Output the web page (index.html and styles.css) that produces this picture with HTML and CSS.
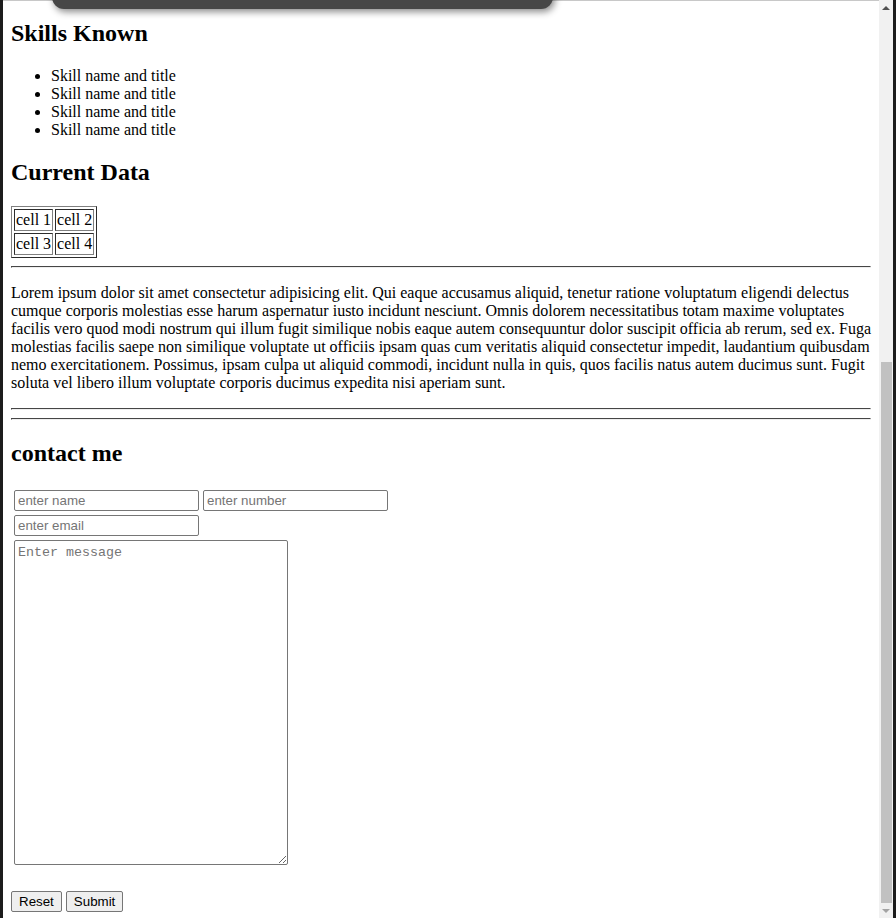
FILE: index.html
```html
<!DOCTYPE html>
<html lang="en">
<head>
    <meta charset="UTF-8">
    <meta name="viewport" content="width=device-width, initial-scale=1.0">
    <title>My Page</title>
    <link rel="stylesheet" href="styles.css">
</head>
<body>
    <div class="edge"></div>
    <div class="window">
        <div class="navbar"></div>
        <div class="page">
            <h2>Skills Known</h2>
            <ul>
                <li>Skill name and title</li>
                <li>Skill name and title</li>
                <li>Skill name and title</li>
                <li>Skill name and title</li>
            </ul>
            <h2>Current Data</h2>
            <table class="data" border="1">
                <tr><td>cell 1</td><td>cell 2</td></tr>
                <tr><td>cell 3</td><td>cell 4</td></tr>
            </table>
            <hr>
            <p>Lorem ipsum dolor sit amet consectetur adipisicing elit. Qui eaque accusamus aliquid, tenetur ratione voluptatum eligendi delectus cumque corporis molestias esse harum aspernatur iusto incidunt nesciunt. Omnis dolorem necessitatibus totam maxime voluptates facilis vero quod modi nostrum qui illum fugit similique nobis eaque autem consequuntur dolor suscipit officia ab rerum, sed ex. Fuga molestias facilis saepe non similique voluptate ut officiis ipsam quas cum veritatis aliquid consectetur impedit, laudantium quibusdam nemo exercitationem. Possimus, ipsam culpa ut aliquid commodi, incidunt nulla in quis, quos facilis natus autem ducimus sunt. Fugit soluta vel libero illum voluptate corporis ducimus expedita nisi aperiam sunt.</p>
            <hr>
            <hr>
            <h2>contact me</h2>
            <form class="contact">
                <table>
                    <tr>
                        <td><input type="text" class="field" placeholder="enter name"></td>
                        <td><input type="text" class="field" placeholder="enter number"></td>
                    </tr>
                    <tr>
                        <td><input type="email" class="field" placeholder="enter email"></td>
                    </tr>
                    <tr>
                        <td colspan="2"><textarea class="message" placeholder="Enter message"></textarea></td>
                    </tr>
                </table>
                <br>
                <button type="reset" class="btn">Reset</button>
                <button type="button" class="btn">Submit</button>
            </form>
        </div>
        <div class="scrollbar">
            <div class="arrow up"></div>
            <div class="track"><div class="thumb"></div></div>
            <div class="arrow down"></div>
        </div>
    </div>
    <div class="edge"></div>
</body>
</html>
```

FILE: styles.css
```css
body {
    margin: 0;
    height: 918px;
    overflow: hidden;
    display: flex;
    background-color: #1c1c1c;
    font-family: "Liberation Serif", "Times New Roman", serif;
    color: #000;
}
.edge {
    width: 3px;
    background-color: #1c1c1c;
}
.window {
    flex: 1;
    display: flex;
    position: relative;
    background-color: #fff;
    box-shadow: inset 0 1px 0 #c8c8c8;
    overflow: hidden;
}
.navbar {
    position: absolute;
    left: 49px;
    top: -30px;
    width: 501px;
    height: 39px;
    background-color: #474747;
    border-radius: 0 0 12px 12px;
    box-shadow: 2px 3px 7px rgba(0, 0, 0, 0.45);
}
.page {
    flex: 1;
    padding: 0 8px;
    overflow: hidden;
}
.page h2 {
    font-size: 24px;
    margin: 0.83em 0;
}
.data td {
    padding: 1px;
}
.page hr {
    margin: 8px 0;
    border: 1px inset #eee;
    border-color: #9a9a9a #eee #eee #9a9a9a;
}
.contact {
    padding-top: 1px;
}
.field {
    box-sizing: border-box;
    width: 185px;
    height: 21px;
    padding: 1px 3px;
    border: 1px solid #767676;
    border-radius: 2px;
    font-family: "Liberation Sans", Arial, sans-serif;
    font-size: 13.33px;
}
.message {
    box-sizing: border-box;
    width: 274px;
    height: 325px;
    padding: 4px 3px 2px;
    border: 1px solid #767676;
    border-radius: 2px;
    font-family: "Liberation Mono", "Courier New", monospace;
    font-size: 13.33px;
}
.btn {
    font-family: "Liberation Sans", Arial, sans-serif;
    font-size: 13.33px;
    height: 21px;
    margin-top: 1px;
    padding: 1px 7px;
    border: 1px solid #767676;
    border-radius: 2px;
    background-color: #efefef;
    color: #000;
}
.scrollbar {
    width: 14px;
    display: flex;
    flex-direction: column;
    background-color: #f1f1f1;
}
.arrow {
    height: 15px;
    display: flex;
    align-items: center;
    justify-content: center;
}
.arrow::before {
    content: "";
    border-left: 4px solid transparent;
    border-right: 4px solid transparent;
}
.arrow.up::before {
    border-bottom: 4px solid #505050;
}
.arrow.down::before {
    border-top: 4px solid #a3a3a3;
}
.track {
    flex: 1;
    display: flex;
    flex-direction: column;
    justify-content: flex-end;
    padding: 0 1px 0 2px;
}
.thumb {
    height: 541px;
    background-color: #c1c1c1;
}
```
